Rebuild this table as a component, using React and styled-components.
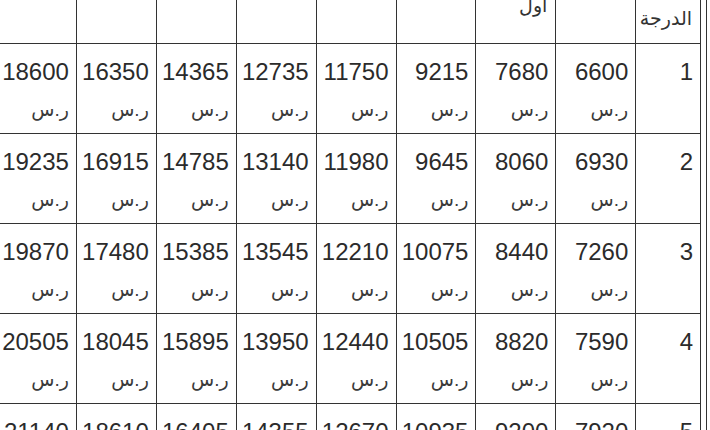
import styled, { createGlobalStyle } from "styled-components";

const GlobalStyle = createGlobalStyle`
    html, body {
        margin: 0;
        padding: 0;
        background: #ffffff;
        overflow: hidden;
    }
    body {
        font-family: "Liberation Sans", Arial, "DejaVu Sans", sans-serif;
        color: #2b2b2b;
    }
`;

const grades = [
    [6600, 7680, 9215, 11750, 12735, 14365, 16350, 18600],
    [6930, 8060, 9645, 11980, 13140, 14785, 16915, 19235],
    [7260, 8440, 10075, 12210, 13545, 15385, 17480, 19870],
    [7590, 8820, 10505, 12440, 13950, 15895, 18045, 20505],
    [7920, 9200, 10935, 12670, 14355, 16405, 18610, 21140],
];

// header texts, right to left. only the bottom of the header row is on screen
const headers = ["الدرجة", "", "اول", "", "", "", "", "", ""];

const App = () => {
    return (
        <>
            <GlobalStyle />
            <Frame dir="rtl">
                <Table>
                    <colgroup>
                        <col style={{ width: 64 }} />
                        {grades[0].map((_, i) => (
                            <col key={i} style={{ width: 79 }} />
                        ))}
                    </colgroup>
                    <thead>
                        <tr>
                            {headers.map((h, i) => (
                                <HeadCell key={i}>
                                    {h && <HeadText $lift={i === 2}>{h}</HeadText>}
                                </HeadCell>
                            ))}
                        </tr>
                    </thead>
                    <tbody>
                        {grades.map((row, r) => (
                            <tr key={r}>
                                <Cell>{r + 1}</Cell>
                                {row.map((salary, c) => (
                                    <Cell key={c}>
                                        {salary}
                                        <br />
                                        <Currency>ر.س</Currency>
                                    </Cell>
                                ))}
                            </tr>
                        ))}
                    </tbody>
                </Table>
            </Frame>
        </>
    );
};

const Frame = styled.div`
    width: 707px;
    height: 430px;
    border-right: 1px solid #333333;
    box-sizing: border-box;
    direction: rtl;
    display: flex;
    justify-content: flex-start;
`;
const Table = styled.table`
    flex: none;
    margin-right: 5px;
    border-collapse: collapse;
    table-layout: fixed;
    width: 705px;
    font-size: 24px;
`;
const HeadCell = styled.th`
    height: 43px;
    padding: 3px 8px 0 6px;
    box-sizing: border-box;
    border: 1px solid #333333;
    border-top: none;
    vertical-align: top;
    text-align: right;
    font-weight: normal;
    line-height: 32px;
    font-size: 19px;
    color: #333333;
`;
const HeadText = styled.div`
    margin-top: ${(p) => (p.$lift ? "-13px" : "0")};
`;
const Cell = styled.td`
    height: 90px;
    box-sizing: border-box;
    padding: 10px 7px 0 0;
    border: 1px solid #333333;
    vertical-align: top;
    text-align: right;
    line-height: 36px;
    white-space: nowrap;
`;
const Currency = styled.span`
    font-size: 19px;
    color: #3a3a3a;
`;

export default App;
